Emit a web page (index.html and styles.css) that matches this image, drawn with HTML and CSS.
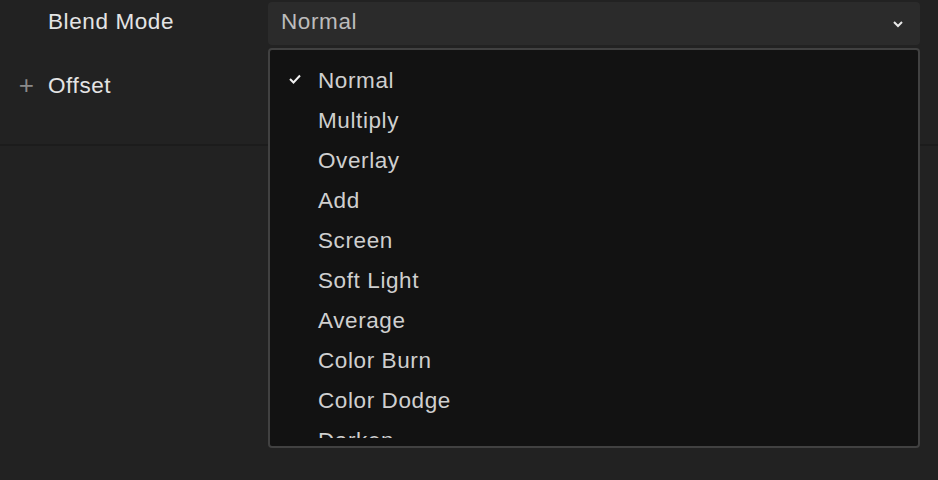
FILE: index.html
```html
<!DOCTYPE html>
<html>
<head>
<meta charset="utf-8">
<link rel="stylesheet" href="styles.css">
</head>
<body>
<div class="panel">
  <div class="rows">
    <div class="row row-blend">
      <div class="label">Blend Mode</div>
      <div class="select-wrap">
        <div class="select">
          <span class="value">Normal</span>
          <svg class="chev" width="12" height="8" viewBox="0 0 12 8"><path d="M2 2 L6 6 L10 2" fill="none" stroke="#e8e8e8" stroke-width="2"/></svg>
        </div>
      </div>
    </div>
    <div class="row row-offset">
      <div class="plus">+</div>
      <div class="label">Offset</div>
    </div>
  </div>
  <div class="divider"></div>
</div>
<div class="menu">
  <div class="viewport">
    <ul class="list">
      <li class="item checked"><svg class="check" width="14" height="12" viewBox="0 0 14 12"><path d="M2 6 L5.5 9.5 L12 2.5" fill="none" stroke="#f2f2f2" stroke-width="2"/></svg>Normal</li>
      <li class="item">Multiply</li>
      <li class="item">Overlay</li>
      <li class="item">Add</li>
      <li class="item">Screen</li>
      <li class="item">Soft Light</li>
      <li class="item">Average</li>
      <li class="item">Color Burn</li>
      <li class="item">Color Dodge</li>
      <li class="item">Darken</li>
    </ul>
  </div>
</div>
</body>
</html>
```
FILE: styles.css
```css
html, body {
  margin: 0;
  padding: 0;
  background: #222222;
  width: 938px;
  height: 480px;
  overflow: hidden;
  font-family: "Liberation Sans", Arial, sans-serif;
  position: relative;
}
.panel {
  display: flex;
  flex-direction: column;
}
.rows {
  height: 144px;
  display: flex;
  flex-direction: column;
}
.row {
  display: flex;
  align-items: center;
}
.row-blend {
  height: 44px;
  margin-top: 1px;
}
.label {
  font-size: 22.5px;
  letter-spacing: 0.6px;
  color: #e4e4e4;
  width: 220px;
  padding-left: 48px;
  margin-top: -2px;
}
.row-blend .label { box-sizing: border-box; width: 268px; }
.select-wrap {
  flex: 0 0 652px;
}
.select {
  height: 43px;
  background: #2b2b2b;
  border-radius: 4px;
  display: flex;
  align-items: center;
  justify-content: space-between;
  padding: 0 16px 0 13px;
  box-sizing: border-box;
}
.value {
  font-size: 22.5px;
  letter-spacing: 0.6px;
  color: #bcbcbc;
  margin-top: -3px;
}
.chev { margin-top: 2px; }
.row-offset {
  height: 40px;
  margin-top: 22px;
}
.row-offset .label { padding-left: 14px; }
.plus {
  font-size: 26px;
  color: #8a8a8a;
  width: 34px;
  text-align: right;
  margin-top: -3px;
  font-weight: 300;
}
.divider {
  height: 2px;
  background: #1c1c1c;
}
.menu {
  position: absolute;
  left: 268px;
  top: 48px;
  width: 652px;
  height: 400px;
  box-sizing: border-box;
  background: #121212;
  border: 2px solid #414141;
  border-radius: 4px;
  overflow: hidden;
  padding-bottom: 8px;
}
.viewport {
  height: 100%;
  overflow: hidden;
}
.list {
  list-style: none;
  margin: 0;
  padding: 11px 0 0 0;
}
.item {
  height: 40px;
  line-height: 40px;
  font-size: 22.5px;
  letter-spacing: 0.6px;
  color: #cfcfcf;
  padding-left: 48px;
  position: relative;
}
.check {
  position: absolute;
  left: 18px;
  top: 12px;
}
```
